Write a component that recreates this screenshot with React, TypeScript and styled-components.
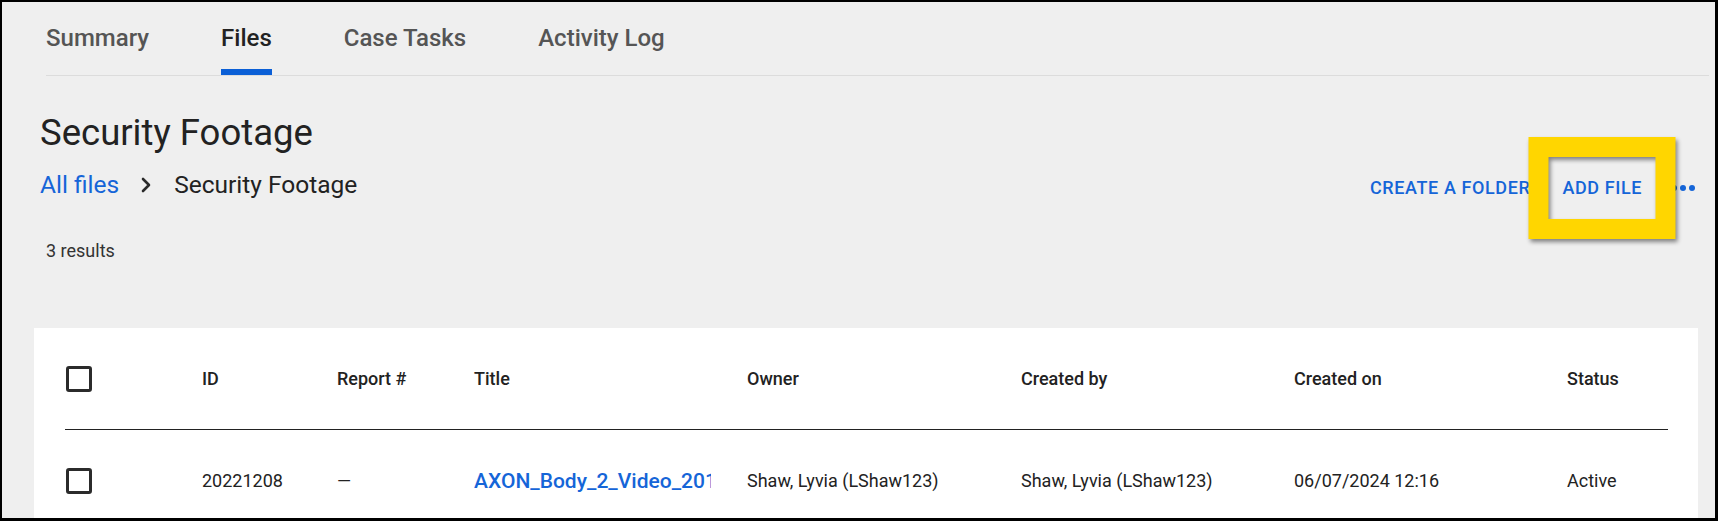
import styled, { createGlobalStyle } from "styled-components";

const GlobalStyle = createGlobalStyle`
  html, body {
    margin: 0;
    padding: 0;
    background: #efefef;
  }
  body {
    font-family: Roboto, "Liberation Sans", Arial, sans-serif;
    color: #222222;
  }
  * {
    box-sizing: border-box;
  }
`;

const tabs = ["Summary", "Files", "Case Tasks", "Activity Log"];

const columns = [
  "ID",
  "Report #",
  "Title",
  "Owner",
  "Created by",
  "Created on",
  "Status",
];

interface FileRowType {
  id: string;
  report: string;
  title: string;
  owner: string;
  createdBy: string;
  createdOn: string;
  status: string;
}

const rows: FileRowType[] = [
  {
    id: "20221208",
    report: "—",
    title: "AXON_Body_2_Video_2019-08-23_1107",
    owner: "Shaw, Lyvia (LShaw123)",
    createdBy: "Shaw, Lyvia (LShaw123)",
    createdOn: "06/07/2024 12:16",
    status: "Active",
  },
];

const App = () => {
  return (
    <>
      <GlobalStyle />
      <Page>
        <TabBar>
          {tabs.map((tab) => (
            <Tab key={tab} active={tab === "Files"}>
              {tab}
            </Tab>
          ))}
        </TabBar>

        <Header>
          <PageTitle>Security Footage</PageTitle>
          <BreadcrumbRow>
            <Breadcrumb>
              <CrumbLink>All files</CrumbLink>
              <Chevron width="10" height="16" viewBox="0 0 10 16">
                <polyline
                  points="2,2 8,8 2,14"
                  fill="none"
                  stroke="#2a2a2a"
                  strokeWidth="2.6"
                  strokeLinecap="round"
                  strokeLinejoin="round"
                />
              </Chevron>
              <CrumbCurrent>Security Footage</CrumbCurrent>
            </Breadcrumb>
            <Actions>
              <ActionBtn>Create a folder</ActionBtn>
              <ActionBtn>
                Add file
                <Highlight />
              </ActionBtn>
              <MoreBtn width="24" height="6" viewBox="0 0 24 6">
                <circle cx="3" cy="3" r="3" fill="#1565d8" />
                <circle cx="12" cy="3" r="3" fill="#1565d8" />
                <circle cx="21" cy="3" r="3" fill="#1565d8" />
              </MoreBtn>
            </Actions>
          </BreadcrumbRow>
          <Results>3 results</Results>
        </Header>

        <Card>
          <HeadRow>
            <Cell>
              <Checkbox />
            </Cell>
            {columns.map((col) => (
              <HeadCell key={col}>{col}</HeadCell>
            ))}
          </HeadRow>
          {rows.map((row) => (
            <BodyRow key={row.id}>
              <Cell>
                <Checkbox />
              </Cell>
              <Cell>{row.id}</Cell>
              <Cell>{row.report}</Cell>
              <Cell>
                <TitleLink>{row.title}</TitleLink>
              </Cell>
              <Cell>{row.owner}</Cell>
              <Cell>{row.createdBy}</Cell>
              <Cell>{row.createdOn}</Cell>
              <Cell>{row.status}</Cell>
            </BodyRow>
          ))}
        </Card>
      </Page>
    </>
  );
};

const Page = styled.div`
  width: 1718px;
  height: 521px;
  overflow: hidden;
  border-style: solid;
  border-color: #000000;
  border-width: 2px 3px 3px 2px;
  background: #efefef;
`;

const TabBar = styled.div`
  display: flex;
  gap: 72px;
  margin: 0 6px 0 44px;
  border-bottom: 1px solid #dcdcdc;
`;

const Tab = styled.div<{ active: boolean }>`
  padding-top: 22px;
  padding-bottom: 17px;
  font-size: 24px;
  line-height: 28px;
  font-weight: 500;
  color: ${(props) => (props.active ? "#222222" : "#555555")};
  border-bottom: 6px solid
    ${(props) => (props.active ? "#0b5fd6" : "transparent")};
`;

const Header = styled.div`
  padding: 35px 20px 0 38px;
`;

const PageTitle = styled.h1`
  margin: 0;
  font-size: 36.5px;
  line-height: 44px;
  font-weight: 400;
  color: #222222;
`;

const BreadcrumbRow = styled.div`
  display: flex;
  justify-content: space-between;
  align-items: center;
  margin-top: 14px;
  height: 32px;
`;

const Breadcrumb = styled.div`
  display: flex;
  align-items: center;
  font-size: 24.5px;
  line-height: 32px;
`;

const CrumbLink = styled.span`
  color: #1565d8;
`;

const Chevron = styled.svg`
  margin: 0 23px 0 22px;
`;

const CrumbCurrent = styled.span`
  color: #222222;
`;

const Actions = styled.div`
  display: flex;
  align-items: center;
  padding-top: 5px;
`;

const ActionBtn = styled.div`
  position: relative;
  margin-right: 32px;
  font-size: 18px;
  line-height: 24px;
  font-weight: 500;
  letter-spacing: 0.6px;
  text-transform: uppercase;
  color: #1565d8;
  &:nth-child(2) {
    margin-right: 29px;
  }
`;

const Highlight = styled.span`
  position: absolute;
  left: 50%;
  top: 50%;
  width: 147px;
  height: 102px;
  transform: translate(-50%, -50%);
  border: 20px solid #ffd600;
  filter: drop-shadow(2px 3px 2px rgba(0, 0, 0, 0.45));
`;

const MoreBtn = styled.svg`
  display: block;
`;

const Results = styled.div`
  margin: 38px 0 0 6px;
  font-size: 18px;
  line-height: 24px;
  color: #333333;
`;

const Card = styled.div`
  margin: 65px 17px 0 32px;
  padding: 0 30px 0 31px;
  background: #ffffff;
  height: 300px;
`;

const rowGrid = `
  display: grid;
  grid-template-columns: 137px 135px 137px 273px 274px 273px 273px 1fr;
  align-items: center;
`;

const HeadRow = styled.div`
  ${rowGrid}
  height: 102px;
  border-bottom: 1px solid #222222;
`;

const BodyRow = styled.div`
  ${rowGrid}
  height: 102px;
`;

const Cell = styled.div`
  font-size: 18px;
  line-height: 24px;
  color: #222222;
  white-space: nowrap;
`;

const HeadCell = styled(Cell)`
  font-weight: 500;
`;

const Checkbox = styled.div`
  width: 26px;
  height: 26px;
  margin-left: 1px;
  border: 3px solid #2b2b2b;
  border-radius: 3px;
`;

const TitleLink = styled.div`
  width: 237px;
  overflow: hidden;
  font-size: 21px;
  font-weight: 500;
  color: #1565d8;
`;

export default App;
